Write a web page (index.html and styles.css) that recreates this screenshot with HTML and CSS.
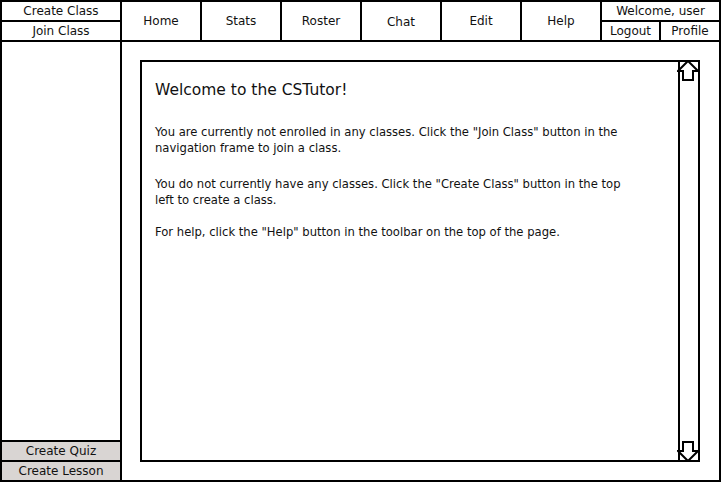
FILE: index.html
```html
<!DOCTYPE html>
<html>
<head>
<meta charset="utf-8">
<link rel="stylesheet" href="styles.css">
</head>
<body>
<div class="app">
  <div class="class-actions">
    <div class="cell">Create Class</div>
    <div class="cell">Join Class</div>
  </div>
  <nav class="toolbar">
    <div class="tab">Home</div>
    <div class="tab">Stats</div>
    <div class="tab">Roster</div>
    <div class="tab tab-low">Chat</div>
    <div class="tab">Edit</div>
    <div class="tab">Help</div>
    <div class="user">
      <div class="cell welcome">Welcome, user</div>
      <div class="cell">Logout</div>
      <div class="cell">Profile</div>
    </div>
  </nav>
  <aside class="sidebar">
    <div class="spacer"></div>
    <div class="cell grey">Create Quiz</div>
    <div class="cell grey">Create Lesson</div>
  </aside>
  <main class="main">
    <div class="box">
      <div class="content">
        <h1>Welcome to the CSTutor!</h1>
        <p class="p1">You are currently not enrolled in any classes. Click the "Join Class" button in the navigation frame to join a class.</p>
        <p class="p2">You do not currently have any classes. Click the "Create Class" button in the top left to create a class.</p>
        <p class="p3">For help, click the "Help" button in the toolbar on the top of the page.</p>
      </div>
      <div class="scrollbar">
        <svg class="arrow" width="22" height="21" viewBox="0 0 22 21"><polygon points="11,1 1,11 6,11 6,20 16,20 16,11 21,11" fill="#fff" stroke="#000" stroke-width="2" stroke-linejoin="miter"/></svg>
        <svg class="arrow" width="22" height="21" viewBox="0 0 22 21"><polygon points="11,20 1,10 6,10 6,1 16,1 16,10 21,10" fill="#fff" stroke="#000" stroke-width="2" stroke-linejoin="miter"/></svg>
      </div>
    </div>
  </main>
</div>
</body>
</html>
```
FILE: styles.css
```css
html, body {
  margin: 0;
  padding: 0;
  background: #fff;
}
body {
  font-family: "DejaVu Sans", sans-serif;
  color: #111;
  font-size: 12px;
}
.app {
  width: 721px;
  height: 482px;
  box-sizing: border-box;
  padding: 2px;
  background: #000;
  display: grid;
  grid-template-columns: 118px 1fr;
  grid-template-rows: 38px 1fr;
  gap: 2px;
}
.cell {
  background: #fff;
  display: flex;
  align-items: center;
  justify-content: center;
  line-height: 1;
}
.class-actions {
  display: grid;
  grid-template-rows: 18px 18px;
  gap: 2px;
}
.toolbar {
  display: grid;
  grid-template-columns: repeat(6, 78px) 1fr;
  gap: 2px;
}
.tab {
  background: #fff;
  display: flex;
  align-items: center;
  justify-content: center;
  font-size: 12px;
  padding-bottom: 1px;
}
.tab-low {
  padding-top: 2px;
  padding-bottom: 0;
}
.user {
  display: grid;
  grid-template-columns: 57px 1fr;
  grid-template-rows: 18px 18px;
  gap: 2px;
}
.welcome {
  grid-column: 1 / 3;
}
.sidebar {
  display: grid;
  grid-template-rows: 1fr 18px 18px;
  gap: 2px;
}
.spacer {
  background: #fff;
}
.grey {
  background: #d9d5d3;
}
.main {
  background: #fff;
  padding: 18px 19px 18px 18px;
  display: flex;
}
.box {
  flex: 1;
  display: flex;
  border: 2px solid #000;
}
.content {
  flex: 1;
  padding: 19px 0 0 13px;
}
.content h1 {
  margin: 0;
  font-size: 15.5px;
  font-weight: normal;
  line-height: 18px;
}
.content p {
  margin: 0;
  max-width: 480px;
  line-height: 16px;
  font-size: 11.6px;
}
.content .p1 { margin-top: 25px; }
.content .p2 { margin-top: 20px; }
.content .p3 { margin-top: 16px; }
.scrollbar {
  width: 18px;
  border-left: 2px solid #000;
  display: flex;
  flex-direction: column;
  justify-content: space-between;
  align-items: center;
  margin-top: -2px;
  margin-bottom: -2px;
}
.arrow {
  display: block;
  margin-left: -2px;
}
```
